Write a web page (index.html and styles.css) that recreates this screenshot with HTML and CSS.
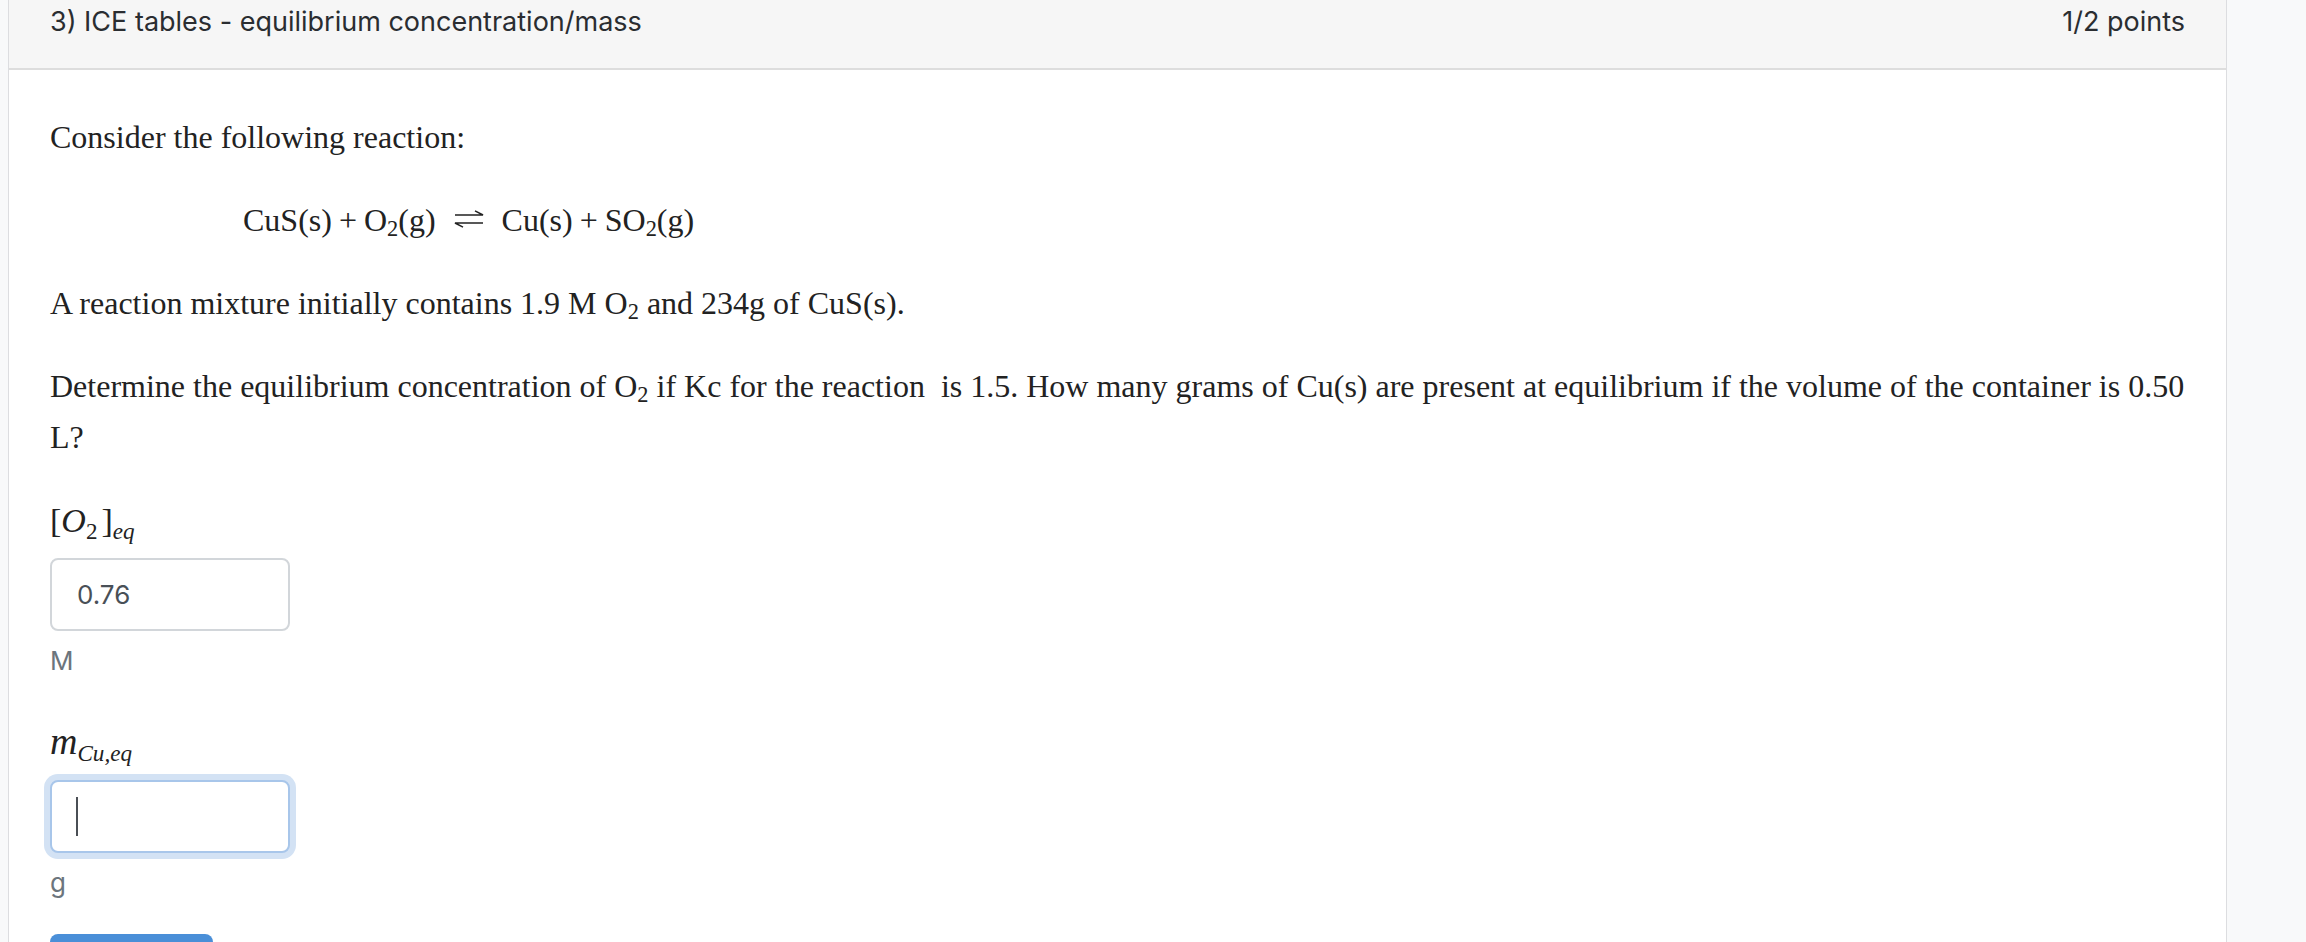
FILE: index.html
```html
<!DOCTYPE html>
<html lang="en">
<head>
	<meta charset="UTF-8">
	<meta name="viewport" content="width=device-width, initial-scale=1.0">
	<title>ICE tables - equilibrium concentration/mass</title>
	<link rel="stylesheet" href="styles.css">
</head>
<body>
	<div class="page">
		<div class="card">
			<div class="card-header">
				<span class="card-title">3) ICE tables - equilibrium concentration/mass</span>
				<span class="card-points">1/2 points</span>
			</div>
			<div class="card-body">
				<p class="text">Consider the following reaction:</p>
				<p class="text equation">
					CuS(s)<span class="op">+</span>O<sub>2</sub>(g)
					<svg class="arrow" width="30" height="18" viewBox="0 0 30 18">
						<path d="M1 5H29L21 0.8" fill="none" stroke="#222" stroke-width="1.5"/>
						<path d="M29 13H1L9 17.2" fill="none" stroke="#222" stroke-width="1.5"/>
					</svg>
					Cu(s)<span class="op">+</span>SO<sub>2</sub>(g)
				</p>
				<p class="text">A reaction mixture initially contains 1.9 M O<sub>2</sub> and 234g of CuS(s).</p>
				<p class="text">Determine the equilibrium concentration of O<sub>2</sub> if Kc for the reaction&nbsp; is 1.5. How many grams of Cu(s) are present at equilibrium if the volume of the container is 0.50 L?</p>

				<div class="part first">
					<div class="math-label">[<i>O</i><sub>2</sub><span class="thin"></span>]<sub class="it">eq</sub></div>
					<div class="input-wrap">
						<input class="answer" type="text" value="0.76">
					</div>
					<div class="unit">M</div>
				</div>

				<div class="part">
					<div class="math-label"><i class="big">m</i><sub class="it">Cu,eq</sub></div>
					<div class="input-wrap">
						<input class="answer focused" type="text" value="">
						<span class="caret"></span>
					</div>
					<div class="unit">g</div>
				</div>

				<button class="btn-submit">Submit</button>
			</div>
		</div>
	</div>
</body>
</html>
```

FILE: styles.css
```css
html, body{margin: 0; padding: 0; height: 100%;}
body{background: #f8f9fa; overflow: hidden; font-family: Inter, "Open Sans", sans-serif; color: #212529;}
.page{padding-left: 8px; height: 100%;}
.card{
	width: 2219px; height: 100%; box-sizing: border-box; background: #fff;
	border-left: 1px solid #dcdde0; border-right: 1px solid #dcdde0;
}
.card-header{
	display: flex; justify-content: space-between; align-items: flex-start;
	height: 70px; box-sizing: border-box; padding: 7px 41px 0;
	background: #f6f6f6; border-bottom: 2px solid #dddddd;
	font-size: 27px; line-height: 30px; color: #2a2d31;
}
.card-body{padding: 10px 41px 0;}
.text{
	font-family: "Liberation Serif", "Times New Roman", serif; font-size: 32px;
	line-height: 51px; margin: 32px 0; color: #222;
}
sub{font-size: 0.7em; line-height: 0; vertical-align: -0.22em;}
.equation{padding-left: 193px;}
.op{margin: 0 7px;}
.arrow{vertical-align: 3px; margin: 0 10px 0 10px;}

.part{margin-top: 36px;}
.part.first{margin-top: 28px;}
.math-label{
	font-family: "Liberation Serif", "Times New Roman", serif; font-size: 34px;
	line-height: 51px; color: #222;
}
.math-label i, .math-label .it{font-style: italic;}
.math-label sub{font-size: 0.68em; vertical-align: -0.3em;}
.math-label .big{font-size: 38px;}
.math-label .thin{display: inline-block; width: 4px;}
.input-wrap{position: relative; width: 240px; margin-top: 12px;}
.answer{
	display: block; width: 240px; height: 73px; box-sizing: border-box;
	border: 2px solid #d2d6da; border-radius: 8px; padding: 0 25px;
	font-family: Inter, "Open Sans", sans-serif; font-size: 26px; color: #495057;
	outline: none; background: #fff; caret-color: transparent;
}
.answer.focused{border-color: #a8c6ea; box-shadow: 0 0 0 6px #d3e2f4;}
.caret{
	position: absolute; left: 26px; top: 17px; width: 2px; height: 39px; background: #4a4f55;
}
.unit{margin-top: 10px; font-size: 26px; line-height: 39px; color: #6c757d;}
.btn-submit{
	display: block; margin-top: 32px; width: 163px; height: 60px;
	background: #4a8fd8; color: #fff; border: none; border-radius: 8px;
	font-family: Inter, sans-serif; font-size: 26px;
}
```
